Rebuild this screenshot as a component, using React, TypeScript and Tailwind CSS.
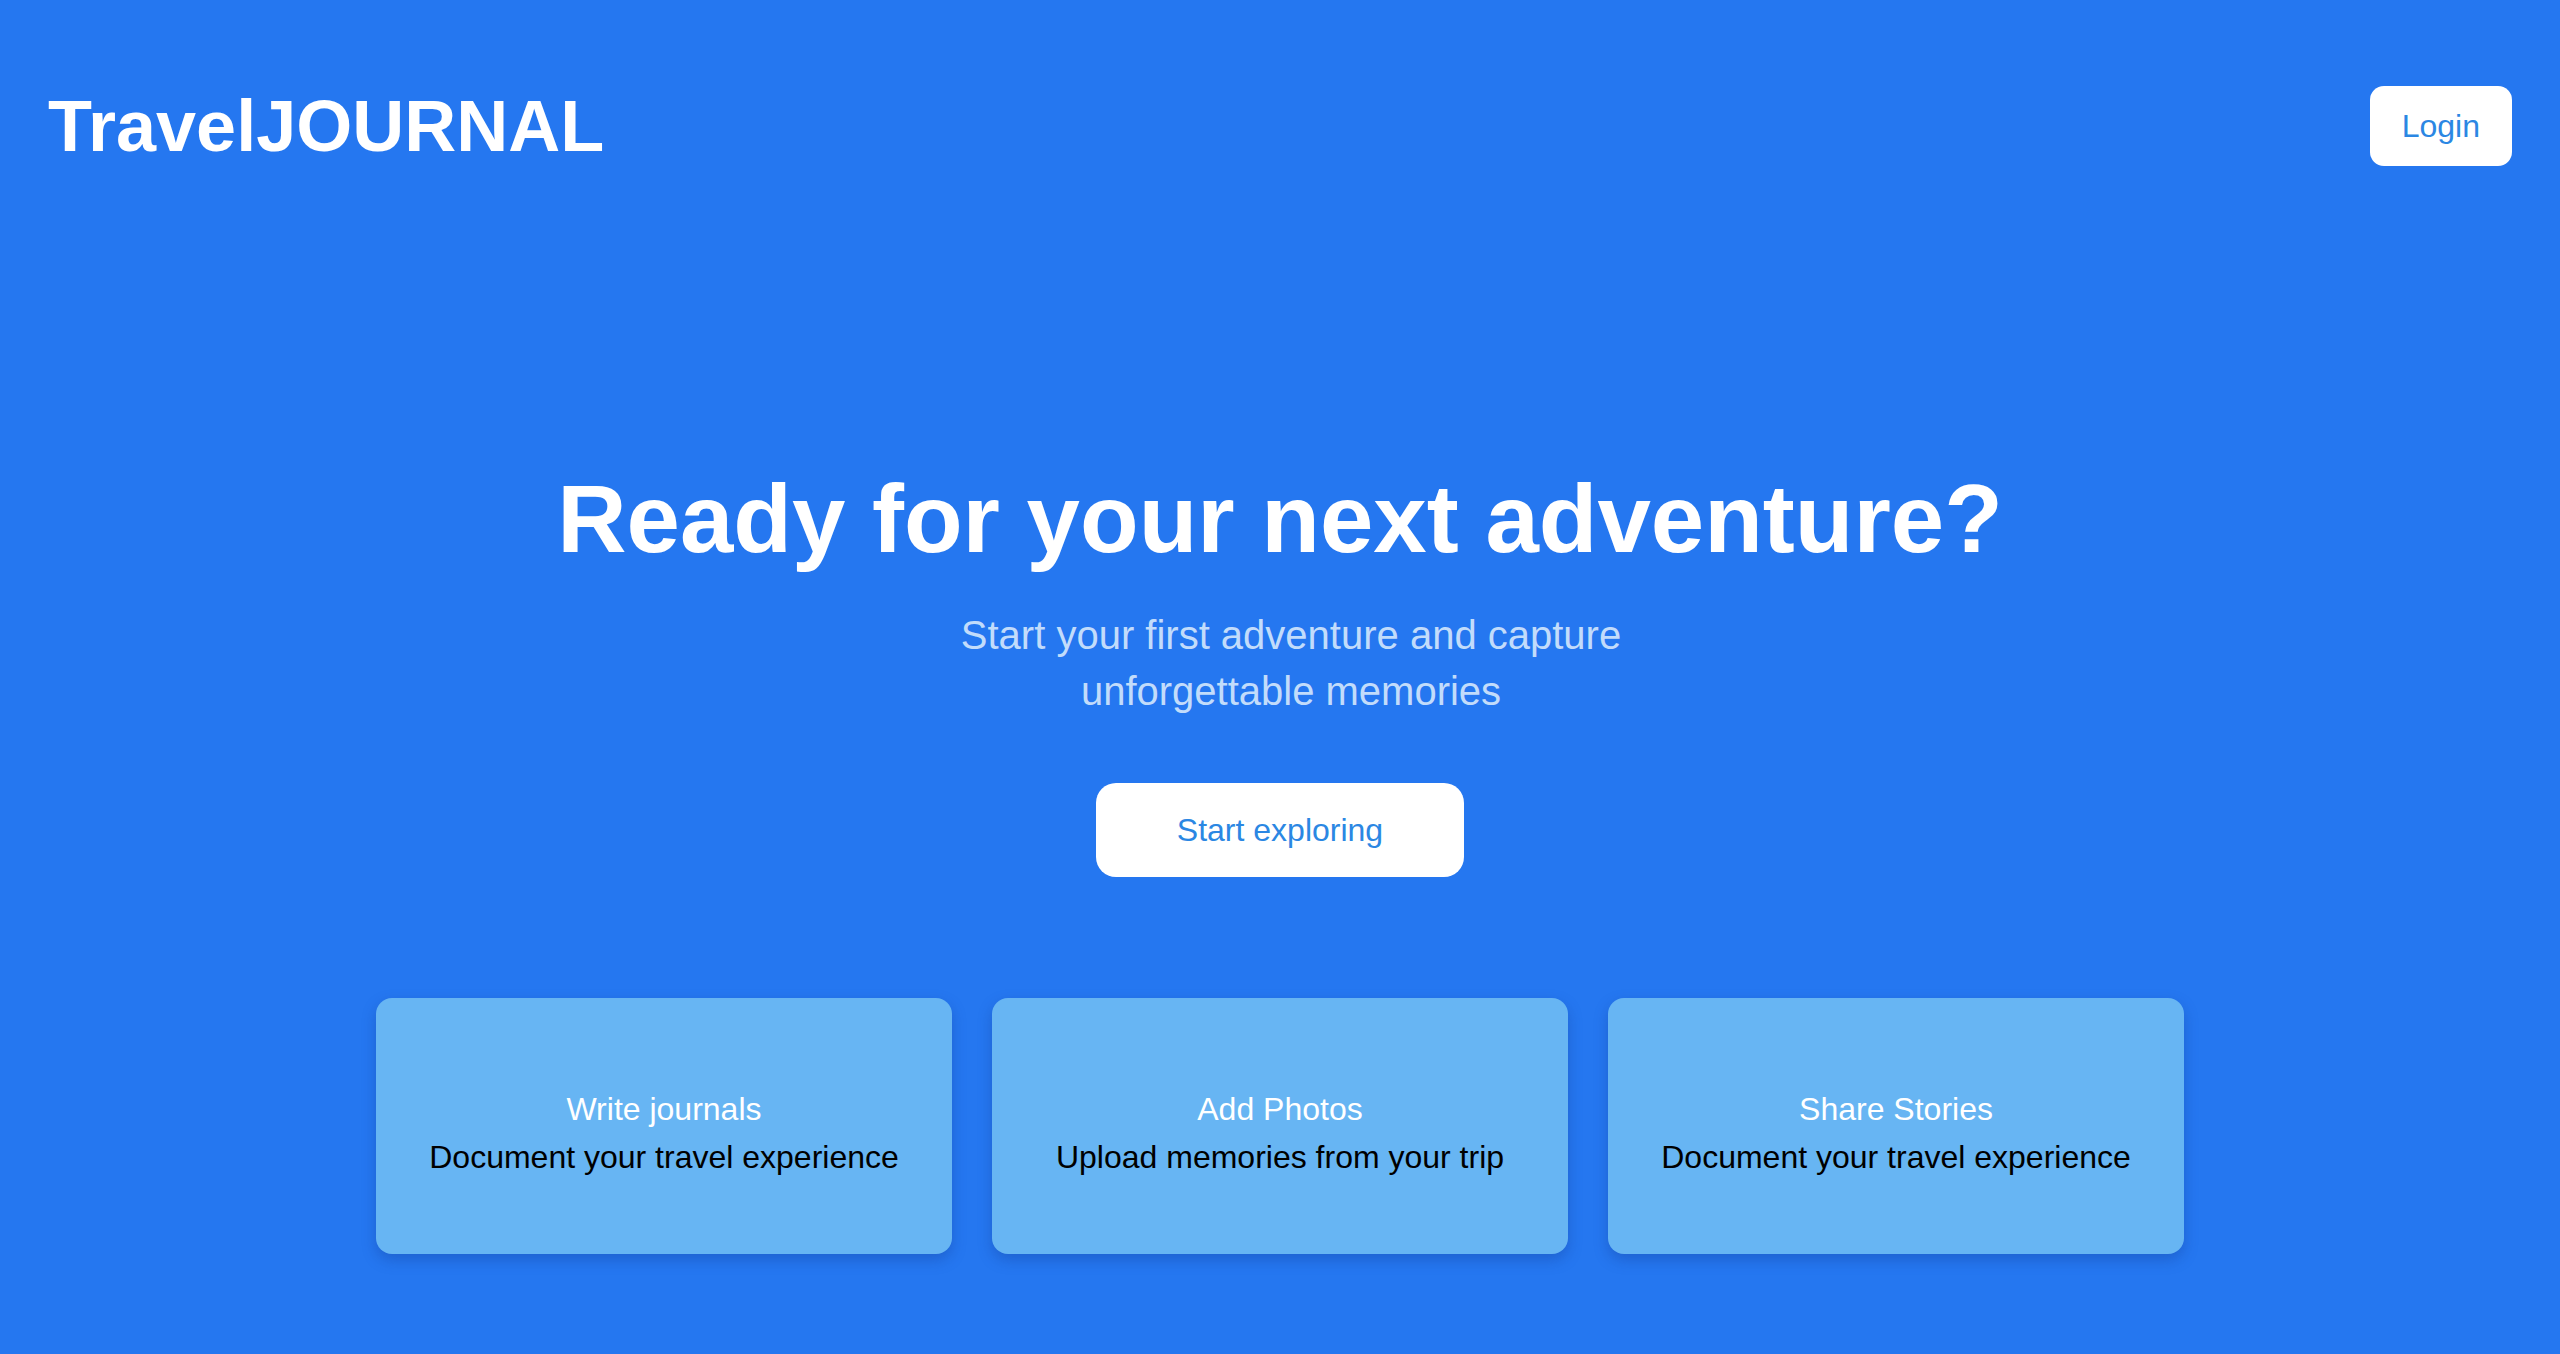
import React from "react";

interface Feature {
	title: string;
	text: string;
}

const features: Feature[] = [
	{ title: "Write journals", text: "Document your travel experience" },
	{ title: "Add Photos", text: "Upload memories from your trip" },
	{ title: "Share Stories", text: "Document your travel experience" },
];

const FeatureCard: React.FC<{ feature: Feature }> = ({ feature }): JSX.Element => {
	return (
		<div className="w-[576px] h-[256px] pt-[87px] rounded-2xl bg-[#67b5f3] shadow-[0_6px_14px_rgba(20,60,150,0.35)] flex flex-col items-center text-center">
			<p className="text-[32px] leading-[48px] text-white">{feature.title}</p>
			<p className="text-[32px] leading-[48px] text-black">{feature.text}</p>
		</div>
	);
};

const App: React.FC = (): JSX.Element => {
	return (
		<div className="min-h-screen w-full bg-[#2577f0] font-['Liberation_Sans',Arial,sans-serif]">
			<header className="flex items-center justify-between px-12 pt-[86px]">
				<h1 className="text-[72px] leading-[80px] font-bold text-white">TravelJOURNAL</h1>
				<button className="px-8 py-4 rounded-[14px] bg-white text-[32px] leading-[48px] text-[#2b87e3]">
					Login
				</button>
			</header>

			<main className="flex flex-col items-center pt-[305px]">
				<h2 className="text-[96px] leading-[96px] font-bold text-white">Ready for your next adventure?</h2>
				<p className="mt-10 max-w-[768px] pl-[22px] text-center text-[40px] leading-[56px] text-[#c2dcfb]">
					Start your first adventure and capture unforgettable memories
				</p>
				<button className="mt-16 px-[81px] py-[23px] rounded-[20px] bg-white text-[32px] leading-[48px] text-[#2b87e3]">
					Start exploring
				</button>

				<div className="mt-[121px] flex gap-10">
					{features.map((f, i) => (
						<FeatureCard key={i} feature={f} />
					))}
				</div>
			</main>
		</div>
	);
};

export default App;
